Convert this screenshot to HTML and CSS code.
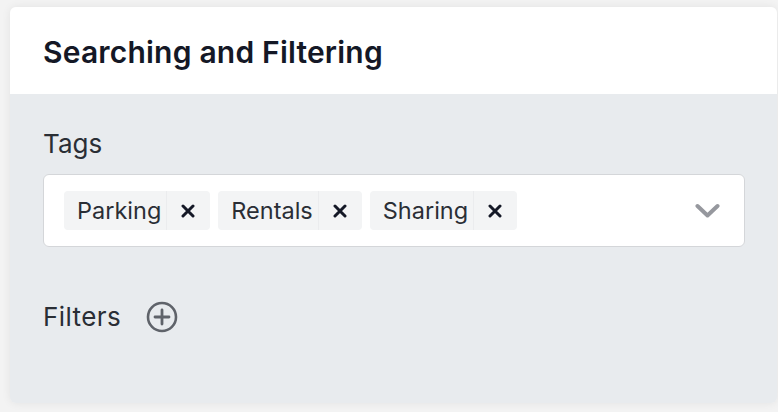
FILE: index.html
```html
<!DOCTYPE html>
<html lang="en">
<head>
  <meta charset="UTF-8" />
  <meta name="viewport" content="width=device-width, initial-scale=1.0"/>
  <title>Searching and Filtering</title>
  <link rel="stylesheet" href="styles.css">
</head>
<body>
  <div class="card">
    <div class="card-header">
      <h1>Searching and Filtering</h1>
    </div>

    <div class="card-body">
      <label class="field-label">Tags</label>
      <div class="select">
        <div class="chips">
          <span class="chip">
            <span class="chip-text">Parking</span>
            <button class="chip-remove"><svg width="14" height="14" viewBox="0 0 14 14"><path d="M2 2 L12 12 M12 2 L2 12" stroke="#141826" stroke-width="3" stroke-linecap="round"/></svg></button>
          </span>
          <span class="chip">
            <span class="chip-text">Rentals</span>
            <button class="chip-remove"><svg width="14" height="14" viewBox="0 0 14 14"><path d="M2 2 L12 12 M12 2 L2 12" stroke="#141826" stroke-width="3" stroke-linecap="round"/></svg></button>
          </span>
          <span class="chip">
            <span class="chip-text">Sharing</span>
            <button class="chip-remove"><svg width="14" height="14" viewBox="0 0 14 14"><path d="M2 2 L12 12 M12 2 L2 12" stroke="#141826" stroke-width="3" stroke-linecap="round"/></svg></button>
          </span>
        </div>
        <svg class="chevron" width="25" height="16" viewBox="0 0 25 16">
          <path d="M2.5 3 L12.5 12.5 L22.5 3" fill="none" stroke="#96989e" stroke-width="4" stroke-linecap="round" stroke-linejoin="round"/>
        </svg>
      </div>

      <div class="filters">
        <span class="field-label filters-label">Filters</span>
        <button class="add-btn">
          <svg width="32" height="32" viewBox="0 0 32 32">
            <circle cx="16" cy="16" r="14" fill="none" stroke="#5f636a" stroke-width="2.6"/>
            <path d="M16 9 V23 M9 16 H23" stroke="#5f636a" stroke-width="2.8" stroke-linecap="round"/>
          </svg>
        </button>
      </div>
    </div>
  </div>
</body>
</html>
```

FILE: styles.css
```css
:root {
  --page-bg: #f3f3f3;
  --header-bg: #ffffff;
  --body-bg: #e8ebee;
  --title: #141826;
  --text: #2a2e35;
  --chip-bg: #f3f4f5;
  --border: #d4d6d9;
}

body {
  margin: 0;
  padding: 7px 1px 9px 10px;
  font-family: Inter, 'Noto Sans', sans-serif;
  background-color: var(--page-bg);
  color: var(--text);
}

.card {
  border-radius: 6px;
  overflow: hidden;
  box-shadow: 0 0 10px rgba(0, 0, 0, 0.07);
}

.card-header {
  background-color: var(--header-bg);
  height: 87px;
  padding: 2px 33px 0;
  box-sizing: border-box;
  display: flex;
  align-items: center;
}

h1 {
  margin: 0;
  font-size: 30px;
  font-weight: 600;
  color: var(--title);
  letter-spacing: 0.2px;
}

.card-body {
  background-color: var(--body-bg);
  padding: 34px 32px 70px 33px;
}

.field-label {
  display: block;
  font-size: 26px;
  color: var(--text);
  line-height: 32px;
}

.filters-label {
  letter-spacing: 0.4px;
}

.select {
  margin-top: 14px;
  height: 71px;
  background: #fff;
  border: 1px solid var(--border);
  border-radius: 6px;
  display: flex;
  align-items: center;
  justify-content: space-between;
  padding: 0 24px 0 20px;
}

.chips {
  display: flex;
  gap: 8px;
}

.chip {
  display: flex;
  align-items: center;
  height: 39px;
  background-color: var(--chip-bg);
  border-radius: 4px;
}

.chip-text {
  padding: 0 5px 0 13px;
  font-size: 23.5px;
  color: var(--text);
  line-height: 39px;
  border-right: 1px solid #ebecee;
}

.chip-remove {
  border: none;
  background: none;
  padding: 0 15px 0 14px;
  height: 39px;
  display: flex;
  align-items: center;
  cursor: pointer;
}

.filters {
  margin-top: 54px;
  display: flex;
  align-items: center;
  gap: 25px;
}

.add-btn {
  border: none;
  background: none;
  padding: 0;
  display: flex;
  cursor: pointer;
}
```
